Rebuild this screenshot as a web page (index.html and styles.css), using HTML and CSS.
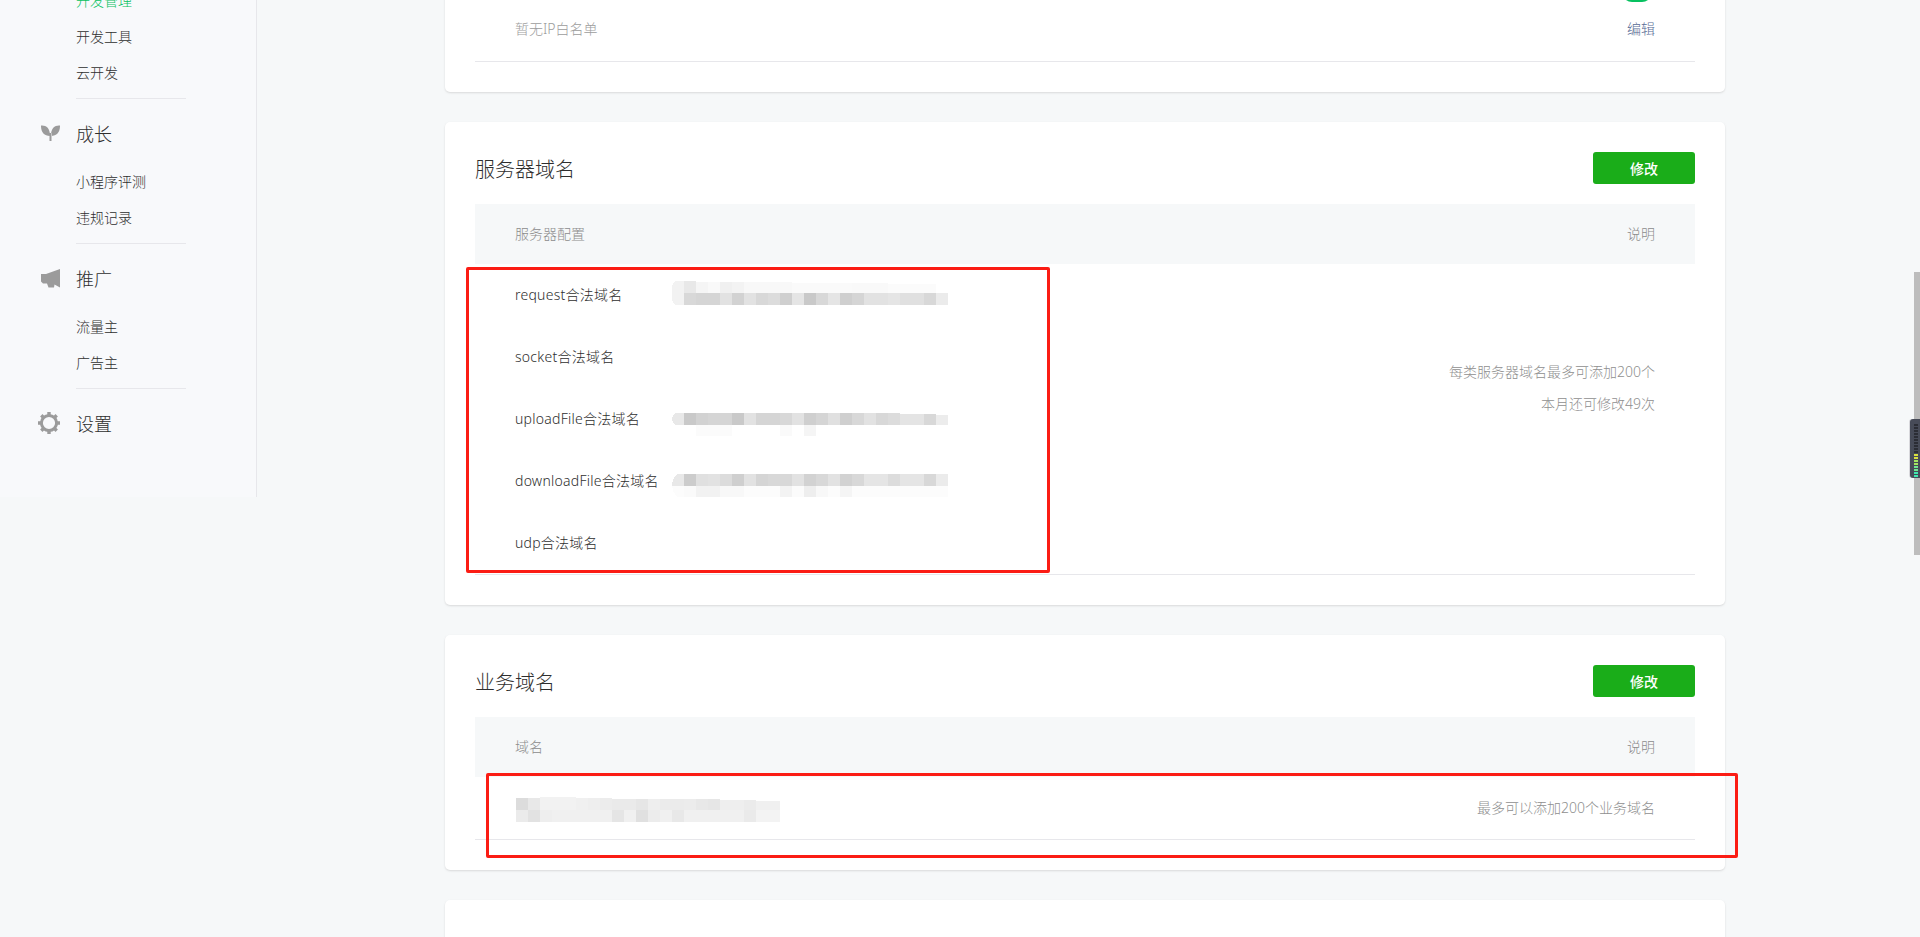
FILE: index.html
```html
<!DOCTYPE html>
<html lang="zh-CN">
<head>
<meta charset="utf-8">
<title>开发管理</title>
<link rel="stylesheet" href="styles.css">
</head>
<body>
<div class="page">
  <nav class="sidebar">
    <a class="nav-item nav-item-active">开发管理</a>
    <a class="nav-item">开发工具</a>
    <a class="nav-item">云开发</a>
    <div class="nav-rule"></div>
    <div class="nav-title">
      <span class="nav-icon">
        <svg width="19" height="16" viewBox="0 0 19 16"><path d="M0 .5C5 0 9.200 3 9 11 3 11 -.2 7 0 .5ZM19 .5C14 0 9.800 3 10 11 16 11 19.200 7 19 .5ZM8.500 8h2v8h-2Z"/></svg>
      </span>成长
    </div>
    <a class="nav-item">小程序评测</a>
    <a class="nav-item">违规记录</a>
    <div class="nav-rule"></div>
    <div class="nav-title">
      <span class="nav-icon">
        <svg width="19" height="19" viewBox="0 0 19 19"><path d="M0 5H5L19 0V18.500L13.500 15.500 13 18.500H7.500L6 14.500H2L0 12.500Z"/></svg>
      </span>推广
    </div>
    <a class="nav-item">流量主</a>
    <a class="nav-item">广告主</a>
    <div class="nav-rule"></div>
    <div class="nav-title">
      <span class="nav-icon nav-icon-gear">
        <svg width="22" height="22" viewBox="0 0 22 22"><circle cx="11" cy="11" r="7.600" fill="none" stroke="#9b9b9b" stroke-width="3"/><path d="M9.300 0h3.400v4H9.300zM9.300 18h3.400v4H9.300zM0 9.300h4v3.400H0zM18 9.300h4v3.400h-4zM2.100 4.500l2.400-2.400 2.800 2.800-2.400 2.400zM14.700 17.100l2.400-2.400 2.800 2.800-2.400 2.400zM17.500 2.100l2.400 2.400-2.800 2.800-2.400-2.400zM4.900 14.700l2.400 2.400-2.800 2.800-2.400-2.400z"/></svg>
      </span>设置
    </div>
  </nav>

  <main class="content">
    <section class="card card-clipped">
      <div class="ip-row">
        <span class="ip-empty">暂无IP白名单</span>
        <div class="ip-actions">
          <span class="toggle"></span>
          <a class="link">编辑</a>
        </div>
      </div>
    </section>

    <section class="card">
      <header class="card-head">
        <h2 class="card-title">服务器域名</h2>
        <button class="btn">修改</button>
      </header>
      <div class="table-head"><span>服务器配置</span><span>说明</span></div>
      <div class="table-body">
        <div class="domains">
          <div class="domain-row">
            <span class="domain-label">request合法域名</span>
            <svg class="mosaic" width="276" height="62" viewBox="0 0 276 62" shape-rendering="crispEdges">
              <path d="M4 17H12V41H4Q0 39 0 35V23Q0 19 4 17Z" fill="#f2f2f2"/>
              <g>
                <rect x="12" y="17" width="12" height="12" fill="#e8e8e8"/><rect x="24" y="18" width="12" height="11" fill="#f5f5f5"/><rect x="36" y="18" width="12" height="11" fill="#f9f9f9"/><rect x="48" y="18" width="12" height="11" fill="#f0f0f0"/><rect x="60" y="18" width="12" height="11" fill="#f3f3f3"/><rect x="72" y="18" width="48" height="11" fill="#f8f8f8"/><rect x="120" y="19" width="60" height="10" fill="#fafafa"/><rect x="180" y="19" width="36" height="10" fill="#f9f9f9"/><rect x="216" y="20" width="48" height="9" fill="#fbfbfb"/>
                <rect x="12" y="29" width="12" height="12" fill="#d8d8d8"/><rect x="24" y="29" width="24" height="12" fill="#d5d5d5"/><rect x="48" y="29" width="12" height="12" fill="#e2e2e2"/><rect x="60" y="29" width="12" height="12" fill="#d2d2d2"/><rect x="72" y="29" width="12" height="12" fill="#e2e2e2"/><rect x="84" y="29" width="12" height="12" fill="#d8d8d8"/><rect x="96" y="29" width="12" height="12" fill="#dcdcdc"/><rect x="108" y="29" width="12" height="12" fill="#cfcfcf"/><rect x="120" y="29" width="12" height="12" fill="#e5e5e5"/><rect x="132" y="29" width="12" height="12" fill="#c9c9c9"/><rect x="144" y="29" width="12" height="12" fill="#d8d8d8"/><rect x="156" y="29" width="12" height="12" fill="#e5e5e5"/><rect x="168" y="29" width="12" height="12" fill="#cfcfcf"/><rect x="180" y="29" width="12" height="12" fill="#d5d5d5"/><rect x="192" y="29" width="24" height="12" fill="#e2e2e2"/><rect x="216" y="29" width="12" height="12" fill="#e5e5e5"/><rect x="228" y="29" width="24" height="12" fill="#e0e0e0"/><rect x="252" y="29" width="12" height="12" fill="#d8d8d8"/><rect x="264" y="29" width="12" height="12" fill="#ebebeb"/>
              </g>
            </svg>
          </div>
          <div class="domain-row"><span class="domain-label">socket合法域名</span></div>
          <div class="domain-row">
            <span class="domain-label">uploadFile合法域名</span>
            <svg class="mosaic" width="276" height="62" viewBox="0 0 276 62" shape-rendering="crispEdges">
              <path d="M4 25H12V37H4Q0 35 0 31Q0 27 4 25Z" fill="#e8e8e8"/>
              <rect x="12" y="25" width="12" height="12" fill="#c9c9c9"/><rect x="24" y="25" width="12" height="12" fill="#d2d2d2"/><rect x="36" y="25" width="24" height="12" fill="#d5d5d5"/><rect x="60" y="25" width="12" height="12" fill="#c9c9c9"/><rect x="72" y="25" width="12" height="12" fill="#e2e2e2"/><rect x="84" y="25" width="24" height="12" fill="#d5d5d5"/><rect x="108" y="25" width="12" height="12" fill="#d8d8d8"/><rect x="120" y="25" width="12" height="12" fill="#e2e2e2"/><rect x="132" y="25" width="12" height="12" fill="#cfcfcf"/><rect x="144" y="25" width="12" height="12" fill="#d5d5d5"/><rect x="156" y="25" width="12" height="12" fill="#e0e0e0"/><rect x="168" y="25" width="12" height="12" fill="#cfcfcf"/><rect x="180" y="25" width="12" height="12" fill="#d8d8d8"/><rect x="192" y="25" width="12" height="12" fill="#e2e2e2"/><rect x="204" y="25" width="12" height="12" fill="#d8d8d8"/><rect x="216" y="25" width="12" height="12" fill="#dcdcdc"/><rect x="228" y="26" width="24" height="11" fill="#e4e4e4"/><rect x="252" y="26" width="12" height="11" fill="#d8d8d8"/><rect x="264" y="27" width="12" height="10" fill="#ececec"/>
              <rect x="24" y="37" width="36" height="11" fill="#fbfbfb"/><rect x="108" y="37" width="12" height="11" fill="#fafafa"/><rect x="132" y="37" width="12" height="11" fill="#f5f5f5"/>
            </svg>
          </div>
          <div class="domain-row">
            <span class="domain-label">downloadFile合法域名</span>
            <svg class="mosaic" width="276" height="62" viewBox="0 0 276 62" shape-rendering="crispEdges">
              <path d="M5 24H12V36H0Q0 28 5 24Z" fill="#e8e8e8"/>
              <rect x="12" y="24" width="12" height="12" fill="#cccccc"/><rect x="24" y="24" width="12" height="12" fill="#e0e0e0"/><rect x="36" y="24" width="12" height="12" fill="#e2e2e2"/><rect x="48" y="24" width="12" height="12" fill="#dcdcdc"/><rect x="60" y="24" width="12" height="12" fill="#cfcfcf"/><rect x="72" y="24" width="12" height="12" fill="#e2e2e2"/><rect x="84" y="24" width="12" height="12" fill="#d5d5d5"/><rect x="96" y="24" width="24" height="12" fill="#d8d8d8"/><rect x="120" y="24" width="12" height="12" fill="#e2e2e2"/><rect x="132" y="24" width="12" height="12" fill="#d2d2d2"/><rect x="144" y="24" width="12" height="12" fill="#d8d8d8"/><rect x="156" y="24" width="12" height="12" fill="#e2e2e2"/><rect x="168" y="24" width="12" height="12" fill="#d2d2d2"/><rect x="180" y="24" width="12" height="12" fill="#d8d8d8"/><rect x="192" y="24" width="24" height="12" fill="#e5e5e5"/><rect x="216" y="24" width="12" height="12" fill="#dcdcdc"/><rect x="228" y="24" width="24" height="12" fill="#e5e5e5"/><rect x="252" y="24" width="12" height="12" fill="#d8d8d8"/><rect x="264" y="24" width="12" height="12" fill="#ebebeb"/>
              <path d="M0 36H12V47H6Q1 44 0 36Z" fill="#fcfcfc"/>
              <rect x="12" y="36" width="12" height="11" fill="#fafafa"/><rect x="24" y="36" width="24" height="11" fill="#f2f2f2"/><rect x="48" y="36" width="24" height="11" fill="#f8f8f8"/><rect x="72" y="36" width="36" height="11" fill="#fcfcfc"/><rect x="108" y="36" width="12" height="11" fill="#f3f3f3"/><rect x="120" y="36" width="12" height="11" fill="#fbfbfb"/><rect x="132" y="36" width="12" height="11" fill="#eeeeee"/><rect x="144" y="36" width="12" height="11" fill="#f8f8f8"/><rect x="156" y="36" width="12" height="11" fill="#fcfcfc"/><rect x="168" y="36" width="12" height="11" fill="#f5f5f5"/><rect x="180" y="36" width="96" height="11" fill="#fcfcfc"/>
            </svg>
          </div>
          <div class="domain-row"><span class="domain-label">udp合法域名</span></div>
        </div>
        <div class="notes">
          <p class="note">每类服务器域名最多可添加200个</p>
          <p class="note">本月还可修改49次</p>
        </div>
      </div>
    </section>

    <section class="card">
      <header class="card-head">
        <h2 class="card-title">业务域名</h2>
        <button class="btn">修改</button>
      </header>
      <div class="table-head"><span>域名</span><span>说明</span></div>
      <div class="table-body business-row">
        <svg class="mosaic-wide" width="264" height="62" viewBox="0 0 264 62" shape-rendering="crispEdges">
          <rect x="0" y="21" width="12" height="12" fill="#dcdcdc"/><rect x="12" y="21" width="12" height="12" fill="#e8e8e8"/><rect x="24" y="20" width="36" height="13" fill="#f2f2f2"/><rect x="60" y="21" width="12" height="12" fill="#f0f0f0"/><rect x="72" y="21" width="12" height="12" fill="#eeeeee"/><rect x="84" y="21" width="12" height="12" fill="#ececec"/><rect x="96" y="22" width="24" height="11" fill="#eaeaea"/><rect x="120" y="22" width="12" height="11" fill="#e6e6e6"/><rect x="132" y="22" width="12" height="11" fill="#eeeeee"/><rect x="144" y="22" width="24" height="11" fill="#ebebeb"/><rect x="168" y="22" width="12" height="11" fill="#ececec"/><rect x="180" y="22" width="12" height="11" fill="#e8e8e8"/><rect x="192" y="22" width="12" height="11" fill="#e6e6e6"/><rect x="204" y="23" width="24" height="10" fill="#eeeeee"/><rect x="228" y="23" width="12" height="10" fill="#ebebeb"/><rect x="240" y="24" width="24" height="9" fill="#f0f0f0"/>
          <rect x="0" y="33" width="12" height="12" fill="#ebebeb"/><rect x="12" y="33" width="12" height="12" fill="#e2e2e2"/><rect x="24" y="33" width="12" height="12" fill="#eeeeee"/><rect x="36" y="33" width="60" height="12" fill="#f0f0f0"/><rect x="96" y="33" width="12" height="12" fill="#e5e5e5"/><rect x="108" y="33" width="12" height="12" fill="#f0f0f0"/><rect x="120" y="33" width="12" height="12" fill="#e0e0e0"/><rect x="132" y="33" width="12" height="12" fill="#ececec"/><rect x="144" y="33" width="12" height="12" fill="#f0f0f0"/><rect x="156" y="33" width="12" height="12" fill="#e8e8e8"/><rect x="168" y="33" width="60" height="12" fill="#f0f0f0"/><rect x="228" y="33" width="12" height="12" fill="#eaeaea"/><rect x="240" y="33" width="24" height="12" fill="#f3f3f3"/>
        </svg>
        <span class="note">最多可以添加200个业务域名</span>
      </div>
    </section>

    <section class="card card-tail"></section>
  </main>
</div>

<div class="mark mark-servers"></div>
<div class="mark mark-business"></div>

<div class="scroll-thumb"></div>
<div class="meter">
  <i class="led"></i><i class="led"></i><i class="led"></i><i class="led"></i><i class="led"></i><i class="led"></i><i class="led"></i><i class="led"></i><i class="led"></i><i class="led"></i><i class="led led-y"></i><i class="led led-y"></i><i class="led led-g"></i><i class="led led-g"></i><i class="led led-t"></i><i class="led led-t"></i><i class="led led-c"></i><i class="led led-c"></i>
</div>
</body>
</html>
```
FILE: styles.css
```css
* { box-sizing: border-box; }

html, body {
  margin: 0;
  height: 937px;
  overflow: hidden;
}

body {
  position: relative;
  background: #f6f8f9;
  color: #2e2e2e;
  font-family: "Noto Sans", "Noto Sans CJK SC", sans-serif;
  font-size: 14px;
  font-weight: 300;
}

.page {
  display: flex;
  align-items: flex-start;
}

/* Sidebar */
.sidebar {
  flex: none;
  width: 257px;
  height: 514px;
  margin-top: -17px;
  padding-left: 76px;
  background: #f8f9fb;
  border-right: 1px solid #e7e7eb;
}

.nav-item {
  display: block;
  height: 36px;
  line-height: 35px;
  color: #2e2e2e;
}

.nav-item-active { color: #07c160; }

.nav-rule {
  width: 110px;
  height: 1px;
  margin-top: 7px;
  background: #e7e7eb;
}

.nav-title {
  display: flex;
  align-items: center;
  height: 36px;
  padding-bottom: 2px;
  margin: 17px 0 12px -38px;
  font-size: 18px;
  color: #2e2e2e;
}

.nav-icon {
  display: flex;
  align-items: center;
  flex: none;
  width: 38px;
  padding-left: 3px;
}

.nav-icon svg { fill: #9b9b9b; }
.nav-icon-gear { padding-left: 0; }

/* Main column */
.content {
  flex: none;
  width: 1280px;
  margin: -30px 0 0 188px;
  display: flex;
  flex-direction: column;
  gap: 30px;
}

.card {
  padding: 30px;
  background: #fff;
  border-radius: 5px;
  box-shadow: 0 1px 2px rgba(150, 150, 150, .3);
}

.card-clipped { padding-top: 0; }
.card-tail { height: 120px; }

.ip-row {
  display: flex;
  justify-content: space-between;
  align-items: flex-end;
  padding: 12px 40px 22px;
  border-bottom: 1px solid #e7e7eb;
}

.ip-empty {
  line-height: 20px;
  color: #9c9c9c;
}

.ip-actions {
  display: flex;
  flex-direction: column;
  align-items: flex-end;
}

.toggle {
  width: 30px;
  height: 20px;
  margin: 0 3px 17px 0;
  border-radius: 10px;
  background: #07c160;
}

.link {
  line-height: 20px;
  color: #576b95;
}

.card-head {
  display: flex;
  justify-content: space-between;
  align-items: center;
  height: 32px;
  margin-bottom: 20px;
}

.card-title {
  margin: 0;
  font-size: 20px;
  font-weight: 300;
  color: #2e2e2e;
}

.btn {
  width: 102px;
  height: 32px;
  padding: 0;
  border: 0;
  border-radius: 3px;
  background: #1aad19;
  color: #fff;
  font: inherit;
  font-weight: 500;
}

.table-head {
  display: flex;
  justify-content: space-between;
  align-items: center;
  height: 60px;
  padding: 0 40px 2px;
  background: #f6f8f9;
  color: #8c8c8c;
}

.table-body {
  display: flex;
  justify-content: space-between;
  border-bottom: 1px solid #e7e7eb;
}

.domains { padding-left: 40px; }

.domain-row {
  display: flex;
  height: 62px;
  line-height: 62px;
}

.domain-label {
  flex: none;
  width: 157px;
  color: #2e2e2e;
  letter-spacing: .25px;
  white-space: nowrap;
}

.mosaic, .mosaic-wide { flex: none; display: block; }

.notes {
  padding: 92px 40px 0 0;
  text-align: right;
}

.note {
  margin: 0;
  line-height: 32px;
  color: #8f8f8f;
}

.business-row {
  align-items: center;
  height: 62px;
  padding: 0 40px 0 41px;
  box-sizing: content-box;
}

/* Hand-drawn annotation boxes */
.mark {
  position: absolute;
  border: 3px solid #fb1c14;
  border-radius: 2px;
}

.mark-servers {
  left: 466px;
  top: 267px;
  width: 584px;
  height: 306px;
}

.mark-business {
  left: 486px;
  top: 773px;
  width: 1252px;
  height: 85px;
}

/* Overlays at the window edge */
.scroll-thumb {
  position: absolute;
  left: 1914px;
  top: 272px;
  width: 6px;
  height: 283px;
  background: #bdbdbd;
}

.meter {
  position: absolute;
  left: 1910px;
  top: 419px;
  width: 10px;
  height: 59px;
  padding: 5px 2px 0 4px;
  display: flex;
  flex-direction: column;
  gap: 1px;
  background: #474b58;
  border-radius: 3px 0 0 3px;
  box-shadow: -1px 0 0 #d8d8dc;
}

.led {
  display: block;
  height: 2px;
  background: #2b2d35;
}

.led-y { background: #d8e040; }
.led-g { background: #a4e660; }
.led-t { background: #70e890; }
.led-c { background: #40e8b0; }
```
